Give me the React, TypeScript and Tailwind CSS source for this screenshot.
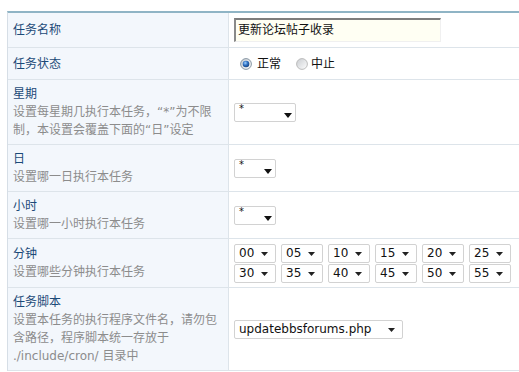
import type { ReactNode } from 'react'

type RowProps = {
  h: string
  label: string
  desc?: ReactNode
  children: ReactNode
}

function Row({ h, label, desc, children }: RowProps) {
  return (
    <div className={`flex border-b border-[#dde4ea] ${h}`}>
      {/* label column */}
      <div className="w-[221px] shrink-0 border-r border-[#dde4ea] bg-[#f3f7fc] pl-[5px] flex flex-col justify-center text-[12px] leading-[18px]">
        <div className="text-[#1c4a78]">{label}</div>
        {desc && <div className="text-[#8c8c8c]">{desc}</div>}
      </div>
      <div className="flex-1 pl-[5px] flex items-center">{children}</div>
    </div>
  )
}

function Arrow({ big }: { big?: boolean }) {
  if (big) {
    return (
      <svg className="absolute right-[3px] bottom-[3px]" width="8" height="5" viewBox="0 0 8 5">
        <path d="M0 0 H8 L4 5 Z" fill="#111" />
      </svg>
    )
  }
  return (
    <svg className="absolute right-[7px] top-[7px]" width="7" height="4" viewBox="0 0 7 4">
      <path d="M0 0 H7 L3.5 4 Z" fill="#222" />
    </svg>
  )
}

function Sel({ w, value, big }: { w: string; value: string; big?: boolean }) {
  return (
    <div className={`relative h-[19px] border border-[#d2d2d2] rounded-[2px] bg-white ${w}`}>
      <span
        className={`absolute left-[4px] text-[#111] ${big ? 'top-[-2px] text-[10px] leading-[14px]' : 'top-0 text-[12px] leading-[17px]'}`}
      >
        {value}
      </span>
      <Arrow big={big} />
    </div>
  )
}

function Radio({ on }: { on?: boolean }) {
  return (
    <svg width="12" height="12" viewBox="0 0 12 12" className="shrink-0">
      <defs>
        <linearGradient id={on ? 'rOn' : 'rOff'} x1="0" y1="0" x2="1" y2="1">
          <stop offset="0" stopColor="#c9ccd0" />
          <stop offset="1" stopColor="#ffffff" />
        </linearGradient>
        <radialGradient id="dot" cx="0.4" cy="0.35" r="0.7">
          <stop offset="0" stopColor="#9fd0ff" />
          <stop offset="0.5" stopColor="#2d6fc0" />
          <stop offset="1" stopColor="#163f7a" />
        </radialGradient>
      </defs>
      <circle cx="6" cy="6" r="5.4" fill={on ? 'url(#rOn)' : 'url(#rOff)'} stroke={on ? '#7b8c9c' : '#b5b5b5'} strokeWidth="0.9" />
      {on && <circle cx="6" cy="6" r="3.3" fill="url(#dot)" />}
    </svg>
  )
}

const minutes = ['00', '05', '10', '15', '20', '25', '30', '35', '40', '45', '50', '55']

export default function App() {
  return (
    <div className="w-[519px] h-[372px] overflow-hidden bg-white font-['DejaVu_Sans','Noto_Sans_CJK_SC',sans-serif]">
      <div className="mt-[11px] ml-[7px] w-[560px] border-t-2 border-t-[#8fb4c5] border-l border-l-[#d6dee6]">
        <Row h="h-[35px]" label="任务名称">
          <div className="w-[207px] h-[24px] border-t-2 border-l-2 border-r border-b border-t-[#7d7d7d] border-l-[#8a8a8a] border-r-[#f0f0f0] border-b-[#f0f0f0] bg-[#fffff3] pl-[2px] text-[12px] leading-[20px] text-[#111]">
            更新论坛帖子收录
          </div>
        </Row>

        <Row h="h-[32px]" label="任务状态">
          <div className="flex items-center text-[12px] text-[#111] pl-[6px]">
            <Radio on />
            <span className="ml-[5px]">正常</span>
            <span className="ml-[15px]">
              <Radio />
            </span>
            <span className="ml-[3px]">中止</span>
          </div>
        </Row>

        <Row
          h="h-[65px]"
          label="星期"
          desc={
            <>
              设置每星期几执行本任务，“*”为不限
              <br />
              制，本设置会覆盖下面的“日”设定
            </>
          }
        >
          <Sel w="w-[62px]" value="*" big />
        </Row>

        <Row h="h-[47px]" label="日" desc="设置哪一日执行本任务">
          <Sel w="w-[42px]" value="*" big />
        </Row>

        <Row h="h-[47px]" label="小时" desc="设置哪一小时执行本任务">
          <Sel w="w-[42px]" value="*" big />
        </Row>

        <Row h="h-[49px]" label="分钟" desc="设置哪些分钟执行本任务">
          <div className="grid grid-cols-[repeat(6,42px)] gap-x-[5px] gap-y-px">
            {minutes.map((m) => (
              <Sel key={m} w="w-[42px]" value={m} />
            ))}
          </div>
        </Row>

        <Row
          h="h-[83px]"
          label="任务脚本"
          desc={
            <>
              设置本任务的执行程序文件名，请勿包
              <br />
              含路径，程序脚本统一存放于
              <br />
              ./include/cron/ 目录中
            </>
          }
        >
          <Sel w="w-[169px]" value="updatebbsforums.php" />
        </Row>
      </div>
    </div>
  )
}
